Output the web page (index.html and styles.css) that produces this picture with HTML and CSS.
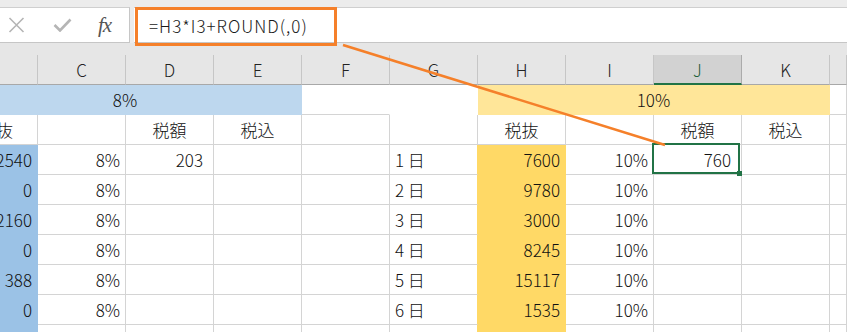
FILE: index.html
```html
<!DOCTYPE html>
<html lang="ja">
<head>
    <meta charset="UTF-8">
    <title>税額の計算</title>
    <link rel="stylesheet" href="styles.css">
</head>
<body>
    <div class="formula-bar">
        <div class="fx-tools">
            <svg class="icon-cancel" width="17" height="16" viewBox="0 0 17 16">
                <path d="M1.5 1 L15.5 15 M15.5 1 L1.5 15" />
            </svg>
            <svg class="icon-enter" width="19" height="14" viewBox="0 0 19 14">
                <polyline points="1.5,7 7,12.5 17.5,1.5" />
            </svg>
            <span class="icon-fx">fx</span>
        </div>
        <div class="formula-input">=H3*I3+ROUND(,0)</div>
    </div>

    <div class="sheet-gap"></div>

    <div class="sheet">
        <div class="row col-head">
            <div class="h"></div>
            <div class="h">C</div>
            <div class="h">D</div>
            <div class="h">E</div>
            <div class="h">F</div>
            <div class="h">G</div>
            <div class="h">H</div>
            <div class="h">I</div>
            <div class="h active">J</div>
            <div class="h">K</div>
            <div class="h"></div>
        </div>

        <div class="row">
            <div class="c mid rate-8 span-4">8%</div>
            <div class="c open-right"></div>
            <div class="c open-right open-bottom"></div>
            <div class="c mid rate-10 span-4 center">10%</div>
            <div class="c"></div>
        </div>

        <div class="row">
            <div class="c num cut">税抜</div>
            <div class="c"></div>
            <div class="c mid">税額</div>
            <div class="c mid">税込</div>
            <div class="c"></div>
            <div class="c"></div>
            <div class="c mid">税抜</div>
            <div class="c"></div>
            <div class="c mid">税額</div>
            <div class="c mid">税込</div>
            <div class="c"></div>
        </div>

        <div class="row">
            <div class="c num base-8">2540</div>
            <div class="c num">8%</div>
            <div class="c num pad">203</div>
            <div class="c"></div>
            <div class="c"></div>
            <div class="c day">1 日</div>
            <div class="c num base-10">7600</div>
            <div class="c num">10%</div>
            <div class="c num pad sel">760</div>
            <div class="c"></div>
            <div class="c"></div>
        </div>

        <div class="row">
            <div class="c num base-8">0</div>
            <div class="c num">8%</div>
            <div class="c"></div>
            <div class="c"></div>
            <div class="c"></div>
            <div class="c day">2 日</div>
            <div class="c num base-10">9780</div>
            <div class="c num">10%</div>
            <div class="c"></div>
            <div class="c"></div>
            <div class="c"></div>
        </div>

        <div class="row">
            <div class="c num base-8">2160</div>
            <div class="c num">8%</div>
            <div class="c"></div>
            <div class="c"></div>
            <div class="c"></div>
            <div class="c day">3 日</div>
            <div class="c num base-10">3000</div>
            <div class="c num">10%</div>
            <div class="c"></div>
            <div class="c"></div>
            <div class="c"></div>
        </div>

        <div class="row">
            <div class="c num base-8">0</div>
            <div class="c num">8%</div>
            <div class="c"></div>
            <div class="c"></div>
            <div class="c"></div>
            <div class="c day">4 日</div>
            <div class="c num base-10">8245</div>
            <div class="c num">10%</div>
            <div class="c"></div>
            <div class="c"></div>
            <div class="c"></div>
        </div>

        <div class="row">
            <div class="c num base-8">388</div>
            <div class="c num">8%</div>
            <div class="c"></div>
            <div class="c"></div>
            <div class="c"></div>
            <div class="c day">5 日</div>
            <div class="c num base-10">15117</div>
            <div class="c num">10%</div>
            <div class="c"></div>
            <div class="c"></div>
            <div class="c"></div>
        </div>

        <div class="row">
            <div class="c num base-8">0</div>
            <div class="c num">8%</div>
            <div class="c"></div>
            <div class="c"></div>
            <div class="c"></div>
            <div class="c day">6 日</div>
            <div class="c num base-10">1535</div>
            <div class="c num">10%</div>
            <div class="c"></div>
            <div class="c"></div>
            <div class="c"></div>
        </div>

        <div class="row">
            <div class="c base-8"></div>
            <div class="c"></div>
            <div class="c"></div>
            <div class="c"></div>
            <div class="c"></div>
            <div class="c day"></div>
            <div class="c base-10"></div>
            <div class="c"></div>
            <div class="c"></div>
            <div class="c"></div>
            <div class="c"></div>
        </div>
    </div>

    <!-- callout pointing from the formula to the selected cell -->
    <div class="callout-box"></div>
    <svg class="callout-line" width="847" height="332" viewBox="0 0 847 332">
        <line x1="343" y1="45" x2="665" y2="145" />
    </svg>
</body>
</html>
```

FILE: styles.css
```css
* {
    margin: 0;
    padding: 0;
    box-sizing: border-box;
}

body {
    position: relative;
    width: 847px;
    height: 332px;
    overflow: hidden;
    background: #fff;
    font-family: "Noto Sans CJK JP", "Noto Sans", sans-serif;
    font-size: 17px;
    font-weight: 300;
    color: #111;
}

/* formula bar */
.formula-bar {
    display: flex;
    height: 43px;
    padding-top: 7px;
    background: #ececec;
}

.fx-tools {
    width: 130px;
    display: flex;
    align-items: center;
    background: #fff;
    border-top: 1px solid #cfcfcf;
    border-bottom: 1px solid #c6c6c6;
    border-right: 1px solid #c6c6c6;
}

.icon-cancel {
    margin-left: 8px;
    fill: none;
    stroke: #b5b5b5;
    stroke-width: 1.6;
}

.icon-enter {
    margin-left: 28px;
    fill: none;
    stroke: #b5b5b5;
    stroke-width: 2.6;
}

.icon-fx {
    margin-left: 26px;
    font-family: "Liberation Serif", serif;
    font-style: italic;
    font-weight: 400;
    font-size: 21px;
    color: #555;
    letter-spacing: -1px;
}

.formula-input {
    flex: 1;
    margin-left: 4px;
    display: flex;
    align-items: center;
    padding-left: 15px;
    background: #fff;
    border-top: 1px solid #cfcfcf;
    border-bottom: 1px solid #c6c6c6;
    color: #1a1a1a;
    letter-spacing: 1px;
}

.sheet-gap {
    height: 12px;
    background: #e6e6e6;
}

/* grid */
.row {
    display: grid;
    grid-template-columns: 38px repeat(9, 88px) 1fr;
    height: 30px;
}

.col-head {
    background: #e6e6e6;
}

.h {
    display: flex;
    align-items: center;
    justify-content: center;
    border-right: 1px solid #c6c6c6;
    border-bottom: 1px solid #a8a8a8;
    color: #222;
}

.h.active {
    background: #d2d2d2;
    border-right-color: #ababab;
    border-bottom: 2px solid #217346;
    color: #1f5f3a;
}

.c {
    display: flex;
    align-items: center;
    padding: 0 5px;
    overflow: hidden;
    white-space: nowrap;
    border-right: 1px solid #d4d4d4;
    border-bottom: 1px solid #d4d4d4;
}

.num {
    justify-content: flex-end;
}

.mid {
    justify-content: center;
}

.pad {
    padding-right: 10px;
}

.cut {
    padding-right: 24px;
}

.day {
    border-right-color: #ffd966;
}

.span-4 {
    grid-column: span 4;
}

.open-right {
    border-right-color: transparent;
}

.open-bottom {
    border-bottom-color: transparent;
}

.rate-8 {
    background: #bdd7ee;
    border-bottom-color: #bdd7ee;
    border-right-color: transparent;
    padding-right: 56px;
}

.rate-10 {
    background: #ffe699;
    border-bottom-color: #ffe699;
    border-right-color: transparent;
}

.base-8 {
    background: #9bc2e6;
    border-color: #9bc2e6;
}

.base-10 {
    background: #ffd966;
    border-color: #ffd966;
}

/* selected cell */
.sel {
    position: relative;
    overflow: visible;
}

.sel::before {
    content: "";
    position: absolute;
    left: -2px;
    top: -2px;
    right: 1px;
    bottom: 0;
    border: 2px solid #217346;
}

.sel::after {
    content: "";
    position: absolute;
    right: -1px;
    bottom: -2px;
    width: 5px;
    height: 5px;
    background: #217346;
}

/* callout */
.callout-box {
    position: absolute;
    left: 135px;
    top: 7px;
    width: 202px;
    height: 39px;
    border: 3px solid #f5802a;
}

.callout-line {
    position: absolute;
    left: 0;
    top: 0;
    pointer-events: none;
}

.callout-line line {
    stroke: #f5802a;
    stroke-width: 2.6;
}
```
